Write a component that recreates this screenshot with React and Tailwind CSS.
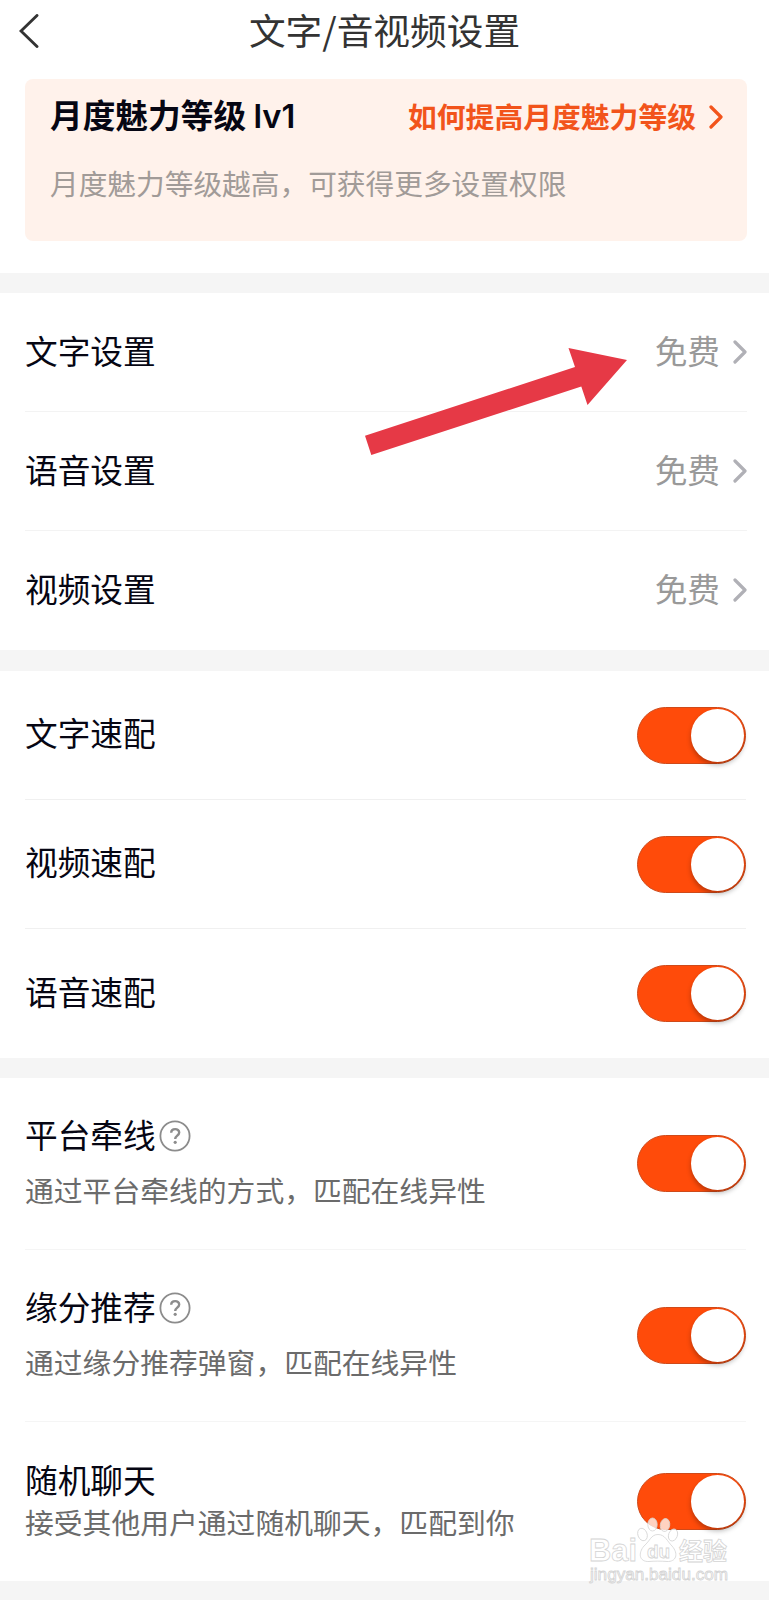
import { useState } from "react";

const priceRows = [
    { title: "文字设置", value: "免费" },
    { title: "语音设置", value: "免费" },
    { title: "视频设置", value: "免费" },
];

const matchRows = ["文字速配", "视频速配", "语音速配"];

const Chevron = ({ className }) => (
    <svg viewBox="0 0 14 24" className={className} fill="none" stroke="currentColor" strokeWidth="3.2" strokeLinecap="round" strokeLinejoin="round">
        <path d="M2 2 L12 12 L2 22" />
    </svg>
);

const HelpIcon = () => (
    <svg viewBox="0 0 32 32" className="ml-[3px] w-8 h-8 text-[#8c8c8c]" fill="none" stroke="currentColor">
        <circle cx="16" cy="16" r="14.6" strokeWidth="1.8" />
        <path d="M12.2 12.8 C12.2 7.9 20.2 7.9 20.2 12.6 C20.2 15.6 16.2 15.8 16.2 19" strokeWidth="2.4" />
        <circle cx="16.2" cy="22.3" r="1.6" fill="currentColor" stroke="none" />
    </svg>
);

const Toggle = () => {
    const [on, setOn] = useState(true);
    return (
        <button
            role="switch"
            aria-checked={on}
            onClick={() => setOn(!on)}
            className={`flex items-center w-[109px] h-[57px] p-[1px] rounded-full border border-[#cf4a1a] ${on ? "justify-end bg-[#ff4b0a]" : "justify-start bg-gray-300"}`}
        >
            <span className="w-[53px] h-[53px] rounded-full bg-white shadow-[0_3px_5px_rgba(0,0,0,0.28)]" />
        </button>
    );
};

const Watermark = () => (
    <svg viewBox="0 0 150 80" className="absolute left-[585px] top-[1512px] w-[150px] h-[80px]" fill="#ffffff" fillOpacity="0.75" stroke="#d4d4d4" strokeWidth="0.8">
        <text x="4" y="48.5" fontSize="32" fontWeight="700" fontFamily="Liberation Sans, sans-serif" textLength="48" lengthAdjust="spacingAndGlyphs">Bai</text>
        <ellipse cx="57.5" cy="22.5" rx="4.6" ry="6.4" transform="rotate(-20 57.5 22.5)" />
        <ellipse cx="67.5" cy="12.5" rx="4.7" ry="6.5" />
        <ellipse cx="80" cy="13" rx="4.7" ry="6.5" transform="rotate(10 80 13)" />
        <ellipse cx="88" cy="23" rx="4.4" ry="6.2" transform="rotate(20 88 23)" />
        <path d="M73 22.5 C80 22.5 82 29 87 34 C94 42 91 50 82 49.5 C76 49 69 49 64 49.5 C54 50 53 41 59 34 C65 29 66 22.5 73 22.5 Z" />
        <text x="62" y="46" fontSize="19" fontWeight="700" fontFamily="Liberation Sans, sans-serif">du</text>
        <text x="94" y="47.5" fontSize="24" fontWeight="700" fontFamily="Noto Sans CJK SC, sans-serif">经验</text>
        <text x="5" y="68" fontSize="16" fontFamily="Liberation Sans, sans-serif" textLength="138" lengthAdjust="spacingAndGlyphs">jingyan.baidu.com</text>
    </svg>
);

const App = () => (
    <div className="relative w-full h-[1600px] overflow-hidden bg-[#f5f5f5] font-['Noto_Sans_CJK_SC',sans-serif] text-[32.7px] leading-none text-[#060613]">
        <header className="bg-white h-[273px] px-[25px]">
            <div className="flex items-center h-[62px] mb-[17px]">
                <button className="-ml-[6px] w-5">
                    <svg viewBox="0 0 20 34" className="w-5 h-[34px] text-[#333]" fill="none" stroke="currentColor" strokeWidth="2.9" strokeLinecap="round">
                        <path d="M18 1.5 L2 17 L18 32.5" />
                    </svg>
                </button>
                <h1 className="flex-1 -mt-[3px] mr-[14px] text-center text-[36.7px] text-[#333]">文字/音视频设置</h1>
            </div>
            <div className="w-[722px] h-[162px] rounded-lg bg-[#fff2eb] pl-[25px] pr-6 pt-[21px]">
                <div className="flex items-center justify-between h-[34px]">
                    <h2 className="-mt-1 font-bold">
                        月度魅力等级 <span className="font-[Inter] font-semibold">lv1</span>
                    </h2>
                    <button className="flex items-center gap-[13px] text-[28.8px] font-bold text-[#f2541b]">
                        <span className="-mt-[2px]">如何提高月度魅力等级</span>
                        <Chevron className="w-[14px] h-6" />
                    </button>
                </div>
                <p className="mt-[35px] text-[28.7px] text-[#a19b98]">月度魅力等级越高，可获得更多设置权限</p>
            </div>
        </header>

        <section className="mt-5 bg-white pl-[25px] pr-[22px] divide-y divide-[#f3f3f3]">
            {priceRows.map((row) => (
                <div key={row.title} className="flex items-center justify-between h-[119px]">
                    <span className="-mt-1">{row.title}</span>
                    <span className="flex items-center gap-[13px] text-[#999]">
                        <span className="-mt-1">{row.value}</span>
                        <Chevron className="w-[14px] h-6 text-[#b0b0b6]" />
                    </span>
                </div>
            ))}
        </section>

        <section className="mt-[21px] bg-white pl-[25px] pr-[23px] divide-y divide-[#f0f0f0]">
            {matchRows.map((title) => (
                <div key={title} className="flex items-center justify-between h-[129px]">
                    <span className="-mt-[5px]">{title}</span>
                    <Toggle />
                </div>
            ))}
        </section>

        <section className="mt-5 bg-white pl-[25px] pr-[23px] divide-y divide-[#f5f5f5]">
            <div className="flex items-center justify-between h-[172px]">
                <div className="flex flex-col gap-6 -mt-[2px]">
                    <div className="flex items-center"><span className="-mt-[3px]">平台牵线</span><HelpIcon /></div>
                    <p className="text-[28.8px] text-[#6b6b6b]">通过平台牵线的方式，匹配在线异性</p>
                </div>
                <Toggle />
            </div>
            <div className="flex items-center justify-between h-[172px]">
                <div className="flex flex-col gap-6 -mt-[2px]">
                    <div className="flex items-center"><span className="-mt-[3px]">缘分推荐</span><HelpIcon /></div>
                    <p className="text-[28.8px] text-[#6b6b6b]">通过缘分推荐弹窗，匹配在线异性</p>
                </div>
                <Toggle />
            </div>
            <div className="flex items-center justify-between h-[159px]">
                <div className="flex flex-col gap-3 -mt-[3px]">
                    <div>随机聊天</div>
                    <p className="text-[28.8px] text-[#6b6b6b]">接受其他用户通过随机聊天，匹配到你</p>
                </div>
                <Toggle />
            </div>
        </section>

        <svg viewBox="0 0 264 110" className="absolute left-[364px] top-[347px] w-[264px] h-[110px]" fill="#e63946">
            <path d="M1 88.7 L211 20 L204.5 1 L263 13 L223.5 58 L217.3 39.5 L7.3 108 Z" />
        </svg>
        <Watermark />
    </div>
);

export default App;
